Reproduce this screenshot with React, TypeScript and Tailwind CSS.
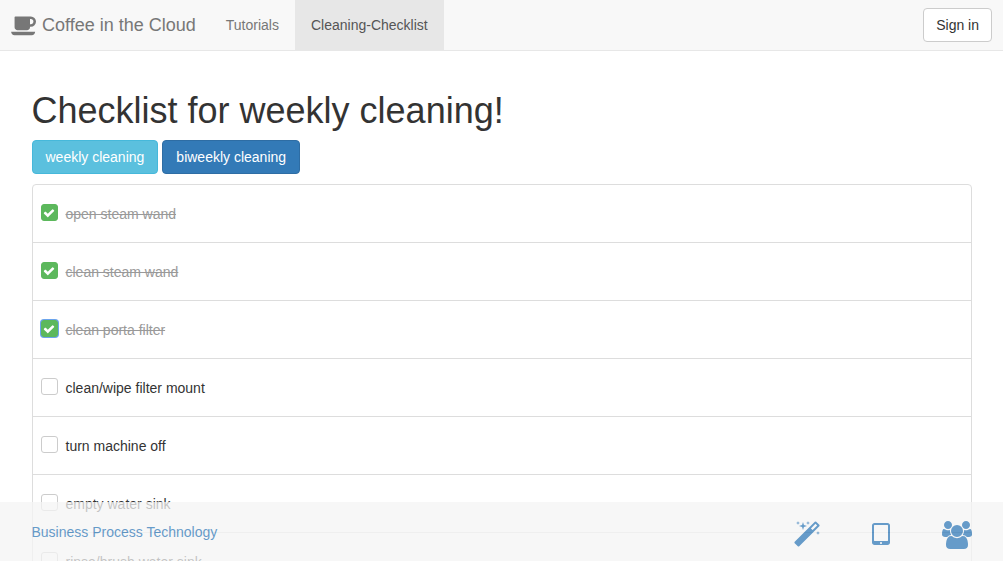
import { useState } from "react";

type GlyphProps = { width: number; d: string; className: string };

// Glyph outlines use font coordinates: y points up, baseline at 0, ascent 1536.
function Glyph({ width, d, className }: GlyphProps) {
  return (
    <svg
      viewBox={`0 0 ${width} 1792`}
      className={className}
      fill="currentColor"
      aria-hidden="true"
    >
      <path transform="translate(0 1536) scale(1 -1)" d={d} />
    </svg>
  );
}

const COFFEE =
  "M1664 896q0 80 -56 136t-136 56h-64v-384h64q80 0 136 56t56 136zM0 128h1792q0 -106 -75 -181t-181 -75h-1280q-106 0 -181 75t-75 181zM1856 896q0 -159 -112.5 -271.5t-271.5 -112.5h-64v-32q0 -92 -66 -158t-158 -66h-704q-92 0 -158 66t-66 158v736q0 26 19 45t45 19h1152q159 0 271.5 -112.5t112.5 -271.5z";
const MAGIC =
  "M1190 955l293 293l-107 107l-293 -293zM1637 1248q0 -27 -18 -45l-1286 -1286q-18 -18 -45 -18t-45 18l-198 198q-18 18 -18 45t18 45l1286 1286q18 18 45 18t45 -18l198 -198q18 -18 18 -45zM286 1438l98 -30l-98 -30l-30 -98l-30 98l-98 30l98 30l30 98zM636 1276l196 -60l-196 -60l-60 -196l-60 196l-196 60l196 60l60 196zM1566 798l98 -30l-98 -30l-30 -98l-30 98l-98 30l98 30l30 98zM926 1438l98 -30l-98 -30l-30 -98l-30 98l-98 30l98 30l30 98z";
const TABLET =
  "M640 128q0 26 -19 45t-45 19t-45 -19t-19 -45t19 -45t45 -19t45 19t19 45zM1024 288v960q0 13 -9.5 22.5t-22.5 9.5h-832q-13 0 -22.5 -9.5t-9.5 -22.5v-960q0 -13 9.5 -22.5t22.5 -9.5h832q13 0 22.5 9.5t9.5 22.5zM1152 1248v-1088q0 -66 -47 -113t-113 -47h-832q-66 0 -113 47t-47 113v1088q0 66 47 113t113 47h832q66 0 113 -47t47 -113z";
const USERS =
  "M593 640q-162 -5 -265 -128h-134q-82 0 -138 40.5t-56 118.5q0 353 124 353q6 0 43.5 -21t97.5 -42.5t119 -21.5q67 0 133 23q-5 -37 -5 -66q0 -139 81 -256zM1664 3q0 -120 -73 -189.5t-194 -69.5h-874q-121 0 -194 69.5t-73 189.5q0 53 3.5 103.5t14 109t26.5 108.5t43 97.5t62 81t85.5 53.5t111.5 20q10 0 43 -21.5t73 -48t107 -48t135 -21.5t135 21.5t107 48t73 48t43 21.5q61 0 111.5 -20t85.5 -53.5t62 -81t43 -97.5t26.5 -108.5t14 -109t3.5 -103.5zM640 1280q0 -106 -75 -181t-181 -75t-181 75t-75 181t75 181t181 75t181 -75t75 -181zM1344 896q0 -159 -112.5 -271.5t-271.5 -112.5t-271.5 112.5t-112.5 271.5t112.5 271.5t271.5 112.5t271.5 -112.5t112.5 -271.5zM1920 671q0 -78 -56 -118.5t-138 -40.5h-134q-103 123 -265 128q81 117 81 256q0 29 -5 66q66 -23 133 -23q59 0 119 21.5t97.5 42.5t43.5 21q124 0 124 -353zM1792 1280q0 -106 -75 -181t-181 -75t-181 75t-75 181t75 181t181 75t181 -75t75 -181z";
const CHECK =
  "M1671 970q0 -40 -28 -68l-724 -724l-136 -136q-28 -28 -68 -28t-68 28l-136 136l-362 362q-28 28 -28 68t28 68l136 136q28 28 68 28t68 -28l294 -295l656 657q28 28 68 28t68 -28l136 -136q28 -28 28 -68z";

const STEPS = [
  { id: "steam-open", text: "open steam wand" },
  { id: "steam-clean", text: "clean steam wand" },
  { id: "porta", text: "clean porta filter" },
  { id: "mount", text: "clean/wipe filter mount" },
  { id: "off", text: "turn machine off" },
  { id: "sink-empty", text: "empty water sink" },
  { id: "sink-rinse", text: "rinse/brush water sink" },
];

function Navbar() {
  return (
    <nav className="flex items-center border-b border-[#e7e7e7] bg-[#f8f8f8] px-[11px]">
      <a href="#home" className="flex items-center gap-[5px] pr-[14px] text-[18px] leading-5 text-[#777]">
        <Glyph width={1920} d={COFFEE} className="h-6 w-[26px]" />
        Coffee in the Cloud
      </a>
      <a href="#tutorials" className="px-4 py-[15px] text-[#777]">
        Tutorials
      </a>
      <a href="#checklist" aria-current="page" className="bg-[#e7e7e7] px-4 py-[15px] text-[#555]">
        Cleaning-Checklist
      </a>
      <button
        type="button"
        className="ml-auto rounded-[4px] border border-[#ccc] bg-white px-3 py-1.5 text-[#333]"
      >
        Sign in
      </button>
    </nav>
  );
}

export default function App() {
  const [done, setDone] = useState<string[]>(["steam-open", "steam-clean", "porta"]);
  const [current, setCurrent] = useState("porta");

  const toggle = (id: string) => {
    setCurrent(id);
    setDone((list) => (list.includes(id) ? list.filter((x) => x !== id) : [...list, id]));
  };

  return (
    <div className="min-h-screen bg-white font-['Liberation_Sans',Arial,sans-serif] text-[14px] leading-5 text-[#333]">
      <Navbar />

      <main className="mx-auto max-w-[970px] px-[15px] pt-10 pb-20">
        <h1 className="text-[36px] leading-10 font-medium">Checklist for weekly cleaning!</h1>
        <div className="mt-[9px] flex gap-1 text-white">
          <button type="button" className="rounded-[4px] border border-[#46b8da] bg-[#5bc0de] px-[13px] py-1.5">
            weekly cleaning
          </button>
          <button type="button" className="rounded-[4px] border border-[#2e6da4] bg-[#337ab7] px-[13px] py-1.5">
            biweekly cleaning
          </button>
        </div>

        <ul className="mt-[10px] divide-y divide-[#ddd] rounded-[4px] border border-[#ddd]">
          {STEPS.map(({ id, text }) => {
            const checked = done.includes(id);
            return (
              <li key={id} className="flex gap-2 px-2 pt-[19px] pb-[18px]">
                <span className="grid size-[17px]">
                  <input
                    type="checkbox"
                    id={id}
                    checked={checked}
                    onChange={() => toggle(id)}
                    className={`col-start-1 row-start-1 size-[17px] appearance-none rounded-[3px] border border-[#ccc] bg-white outline-none checked:border-[#5cb85c] checked:bg-[#5cb85c] ${
                      current === id ? "ring-1 ring-[#6ba4ec]" : ""
                    }`}
                  />
                  {checked && (
                    <Glyph
                      width={1792}
                      d={CHECK}
                      className="pointer-events-none col-start-1 row-start-1 size-3 self-center justify-self-center text-white"
                    />
                  )}
                </span>
                <label htmlFor={id} className={checked ? "text-[#999] line-through" : ""}>
                  {text}
                </label>
              </li>
            );
          })}
        </ul>
      </main>

      <footer className="fixed inset-x-0 bottom-0 bg-[#f5f5f5] opacity-75">
        <div className="mx-auto flex max-w-[970px] justify-between px-[15px] pt-[19px] pb-3 text-[#337ab7]">
          <a href="#bpt" className="pt-px">Business Process Technology</a>
          <div className="flex gap-[52px]">
            <a href="#magic" aria-label="Magic">
              <Glyph width={1664} d={MAGIC} className="h-7 w-[26px]" />
            </a>
            <a href="#tablet" aria-label="Tablet">
              <Glyph width={1152} d={TABLET} className="h-7 w-[18px]" />
            </a>
            <a href="#team" aria-label="Team">
              <Glyph width={1920} d={USERS} className="h-7 w-[30px]" />
            </a>
          </div>
        </div>
      </footer>
    </div>
  );
}
